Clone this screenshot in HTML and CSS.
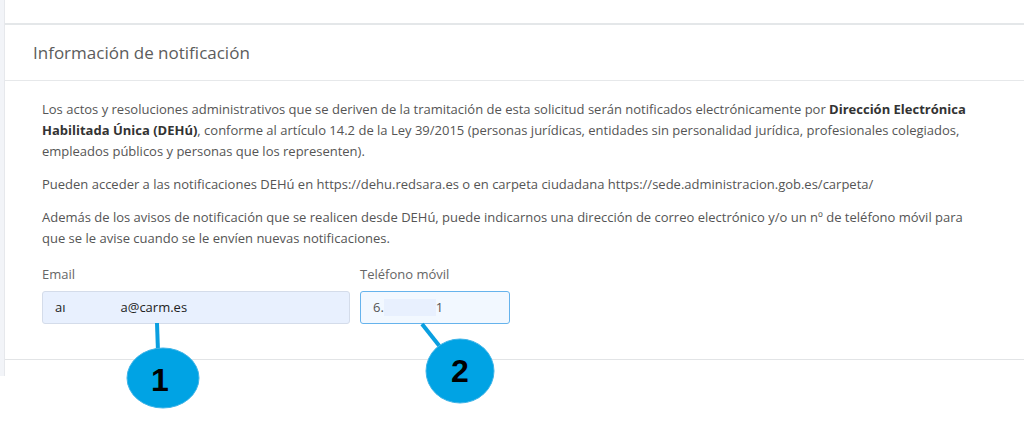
FILE: index.html
```html
<!DOCTYPE html>
<html lang="es">
<head>
<meta charset="utf-8">
<title>Información de notificación</title>
<link rel="stylesheet" href="styles.css">
</head>
<body>
<div class="app">
  <div class="main">
    <div class="prev-panel"></div>
    <section class="panel">
      <header class="panel-heading">Información de notificación</header>
      <div class="panel-body">
        <p>Los actos y resoluciones administrativos que se deriven de la tramitación de esta solicitud serán notificados electrónicamente por <b>Dirección Electrónica Habilitada Única (DEHú)</b>, conforme al artículo 14.2 de la Ley 39/2015 (personas jurídicas, entidades sin personalidad jurídica, profesionales colegiados, empleados públicos y personas que los representen).</p>
        <p>Pueden acceder a las notificaciones DEHú en https://dehu.redsara.es o en carpeta ciudadana https://sede.administracion.gob.es/carpeta/</p>
        <p>Además de los avisos de notificación que se realicen desde DEHú, puede indicarnos una dirección de correo electrónico y/o un nº de teléfono móvil para que se le avise cuando se le envíen nuevas notificaciones.</p>
        <div class="fields">
          <div class="field field-email">
            <label class="label">Email</label>
            <div class="input input-autofill"><span>aı</span><span class="redact redact-email"></span><span>a@carm.es</span></div>
          </div>
          <div class="field field-phone">
            <label class="label">Teléfono móvil</label>
            <div class="input input-focus"><span>6.</span><span class="redact redact-phone"></span><span>1</span></div>
          </div>
        </div>
      </div>
    </section>
  </div>
</div>
<svg class="callouts" width="1024" height="437" viewBox="0 0 1024 437">
  <line x1="157" y1="323" x2="158" y2="352" stroke="#0a9fe0" stroke-width="4"/>
  <ellipse cx="163" cy="378" rx="36" ry="30" fill="#00a3e4" stroke="#3fb4e8" stroke-width="1"/>
  <text x="160" y="391" class="num">1</text>
  <line x1="422" y1="324" x2="441" y2="348" stroke="#0a9fe0" stroke-width="4"/>
  <ellipse cx="460" cy="371" rx="34" ry="32" fill="#00a3e4" stroke="#3fb4e8" stroke-width="1"/>
  <text x="460" y="382" class="num">2</text>
</svg>
</body>
</html>
```
FILE: styles.css
```css
html, body {
  margin: 0;
  padding: 0;
  background: #fff;
}
body {
  width: 1024px;
  height: 437px;
  position: relative;
  overflow: hidden;
  font-family: "Open Sans", "Noto Sans", sans-serif;
  color: #555;
}
.app {
  height: 376px;
  background: #f2f4f8;
  padding-left: 4px;
  box-sizing: border-box;
}
.main {
  height: 100%;
  background: #fff;
  border-left: 1px solid #e6e8ec;
}
.prev-panel {
  height: 23px;
  border-bottom: 2px solid #e4e7e9;
}
.panel {
  border-bottom: 1px solid #e2e4e6;
}
.panel-heading {
  height: 55px;
  border-bottom: 1px solid #e6e8ea;
  padding-left: 28px;
  display: flex;
  align-items: center;
  font-size: 17px;
  color: #5c5c5c;
}
.panel-body {
  padding: 18px 40px 35px 37px;
  font-size: 13px;
  line-height: 21px;
}
.panel-body p {
  margin: 0 0 12px;
}
.panel-body b {
  color: #333;
  font-weight: 700;
}
.fields {
  display: flex;
  gap: 10px;
  padding-top: 4px;
}
.field {
  display: flex;
  flex-direction: column;
}
.field-email { width: 308px; }
.field-phone { width: 150px; }
.label {
  font-size: 13px;
  line-height: 18px;
  color: #666;
  margin-bottom: 8px;
}
.input {
  height: 33px;
  box-sizing: border-box;
  border-radius: 3px;
  display: flex;
  align-items: center;
  padding-left: 12px;
  font-size: 13px;
  color: #222;
}
.input-autofill {
  background: #e8f0fe;
  border: 1px solid #d4dcea;
}
.input-focus {
  background: #f2f8ff;
  border: 1px solid #66b3ec;
  color: #555;
}
.redact { display: inline-block; }
.redact-email { width: 55px; }
.redact-phone {
  width: 52px;
  height: 17px;
  background: #e8f0fe;
}
.callouts {
  position: absolute;
  left: 0;
  top: 0;
  pointer-events: none;
}
.num {
  font-family: "Liberation Sans", Arial, sans-serif;
  font-weight: 700;
  font-size: 32px;
  fill: #000;
  text-anchor: middle;
}
```
